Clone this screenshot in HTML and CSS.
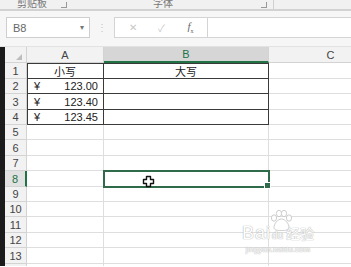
FILE: index.html
```html
<!DOCTYPE html>
<html>

<head>
    <meta charset="UTF-8">
    <title>Sheet1</title>
    <link rel="stylesheet" href="styles.css">
</head>

<body>
    <div class="ribbon">
        <span class="group-label lbl-clip">剪贴板</span>
        <span class="launcher"></span>
        <span class="group-label lbl-font">字体</span>
        <span class="launcher"></span>
        <span class="sep"></span>
    </div>

    <div class="formula-bar">
        <div class="name-box">
            <span>B8</span>
            <span class="arrow">&#9662;</span>
        </div>
        <div class="grip">&#8942;</div>
        <div class="fx-buttons">
            <span class="fx-btn">&#10005;</span>
            <span class="fx-btn">&#10003;</span>
            <span class="fx-btn fx"><i>f</i><sub>x</sub></span>
        </div>
        <div class="fx-input"></div>
    </div>

    <div class="main">
        <div class="edge"></div>
        <div class="sheet">
            <!-- header -->
            <div class="hd corner"><span class="tri"></span></div>
            <div class="hd col">A</div>
            <div class="hd col col-sel">B</div>
            <div class="hd col">C</div>

            <div class="hd row">1</div>
            <div class="c t-left t-top t-bottom t-right center">小写</div>
            <div class="c t-top t-bottom t-right center">大写</div>
            <div class="c"></div>

            <div class="hd row">2</div>
            <div class="c t-left t-bottom t-right money"><span>¥</span><span>123.00</span></div>
            <div class="c t-bottom t-right"></div>
            <div class="c"></div>

            <div class="hd row">3</div>
            <div class="c t-left t-bottom t-right money"><span>¥</span><span>123.40</span></div>
            <div class="c t-bottom t-right"></div>
            <div class="c"></div>

            <div class="hd row">4</div>
            <div class="c t-left t-bottom t-right money"><span>¥</span><span>123.45</span></div>
            <div class="c t-bottom t-right"></div>
            <div class="c"></div>

            <div class="hd row">5</div>
            <div class="c"></div>
            <div class="c"></div>
            <div class="c"></div>

            <div class="hd row">6</div>
            <div class="c"></div>
            <div class="c"></div>
            <div class="c"></div>

            <div class="hd row">7</div>
            <div class="c"></div>
            <div class="c"></div>
            <div class="c"></div>

            <div class="hd row row-sel">8</div>
            <div class="c"></div>
            <div class="c sel"></div>
            <div class="c"></div>

            <div class="hd row">9</div>
            <div class="c"></div>
            <div class="c"></div>
            <div class="c"></div>

            <div class="hd row">10</div>
            <div class="c"></div>
            <div class="c"></div>
            <div class="c"></div>

            <div class="hd row">11</div>
            <div class="c"></div>
            <div class="c"></div>
            <div class="c"></div>

            <div class="hd row">12</div>
            <div class="c"></div>
            <div class="c"></div>
            <div class="c"></div>

            <div class="hd row">13</div>
            <div class="c"></div>
            <div class="c"></div>
            <div class="c"></div>

            <div class="hd row"></div>
            <div class="c"></div>
            <div class="c"></div>
            <div class="c"></div>
        </div>

        <!-- mouse pointer over B8 -->
        <svg class="cursor" width="13" height="13" viewBox="0 0 13 13">
            <path d="M4.5 1.5h4v3h3v4h-3v3h-4v-3h-3v-4h3z" fill="#fff" stroke="#111" stroke-width="1.4" stroke-linejoin="round"/>
        </svg>

        <!-- watermark -->
        <div class="watermark">
            <svg class="paw" width="26" height="22" viewBox="0 0 26 22">
                <g fill="#fff" stroke="#c9c9c9" stroke-width="1">
                    <ellipse cx="6" cy="9" rx="2.6" ry="3.2"/>
                    <ellipse cx="11" cy="4.5" rx="2.6" ry="3.2"/>
                    <ellipse cx="16" cy="4.5" rx="2.6" ry="3.2"/>
                    <ellipse cx="21" cy="9" rx="2.6" ry="3.2"/>
                    <path d="M13.5 10c-4 0-7.5 5-7.5 8.5 0 2.5 3 3 7.5 3s7.5-.5 7.5-3c0-3.5-3.5-8.5-7.5-8.5z"/>
                </g>
            </svg>
            <div class="wm-line">
                <span class="wm-bai">Bai</span><span class="wm-du">du</span><span class="wm-jy">经验</span>
            </div>
            <div class="wm-url">jingyan.baidu.com</div>
        </div>
    </div>
</body>

</html>
```

FILE: styles.css
```css
body {
    margin: 0;
    width: 351px;
    height: 267px;
    overflow: hidden;
    background: #ffffff;
    font-family: "Liberation Sans", "Noto Sans CJK SC", sans-serif;
    color: #333;
}

/* ribbon strip, cut off at the top */
.ribbon {
    height: 9px;
    display: flex;
    align-items: flex-end;
    overflow: hidden;
    background: #f1f1f1;
    border-bottom: 2px solid #d2d2d2;
    font-family: "Noto Sans CJK SC", sans-serif;
    font-size: 10px;
    color: #777;
}

.group-label {
    line-height: 12px;
    flex: none;
}

.lbl-clip {
    margin-left: 17px;
}

.lbl-font {
    margin-left: 86px;
}

.launcher {
    width: 5px;
    height: 5px;
    margin-left: 14px;
    margin-bottom: 1px;
    border-right: 1px solid #999;
    border-bottom: 1px solid #999;
    flex: none;
}

.lbl-font + .launcher {
    margin-left: 88px;
}

.sep {
    width: 1px;
    height: 9px;
    margin-left: 6px;
    background: #d0d0d0;
}

/* formula bar */
.formula-bar {
    height: 36px;
    box-sizing: border-box;
    display: flex;
    align-items: flex-start;
    padding: 6px 0 0 6px;
    background: #f6f6f6;
    border-bottom: 1px solid #e2e2e2;
}

.name-box {
    width: 84px;
    height: 21px;
    box-sizing: border-box;
    display: flex;
    align-items: center;
    justify-content: space-between;
    padding: 0 5px 0 6px;
    background: #fff;
    border: 1px solid #cfcfcf;
    font-size: 11px;
    color: #666;
}

.name-box .arrow {
    font-size: 8px;
    color: #777;
}

.grip {
    width: 24px;
    height: 21px;
    line-height: 21px;
    text-align: center;
    font-size: 10px;
    color: #c4c4c4;
}

.fx-buttons {
    width: 93px;
    height: 21px;
    box-sizing: border-box;
    display: flex;
    align-items: center;
    background: #fff;
    border: 1px solid #d4d4d4;
    border-right: none;
}

.fx-btn {
    width: 29px;
    text-align: center;
    font-size: 10px;
    color: #c8c8c8;
}

.fx-btn:first-child {
    margin-left: 3px;
}

.fx {
    font-family: "Liberation Serif", serif;
    color: #666;
    font-size: 11px;
}

.fx sub {
    font-size: 6px;
}

.fx-input {
    flex: 1;
    height: 21px;
    box-sizing: border-box;
    background: #fff;
    border: 1px solid #d4d4d4;
    border-right: none;
}

/* grid */
.main {
    position: relative;
    display: flex;
    height: 219px;
    overflow: hidden;
}

.edge {
    width: 5px;
    flex: none;
    background: #1b1b1b;
}

.sheet {
    display: grid;
    grid-template-columns: 22px 77px 165px 124px;
    grid-template-rows: 16px 16px 15px 16px 15px 15px 16px 15px 16px 15px 15px 16px 15px 16px 15px;
    font-size: 11px;
}

.hd {
    box-sizing: border-box;
    background: #f2f2f2;
    border-right: 1px solid #d3d3d3;
    border-bottom: 1px solid #d3d3d3;
    color: #444;
    display: flex;
    align-items: center;
    justify-content: center;
}

.corner {
    position: relative;
}

.tri {
    width: 0;
    height: 0;
    margin: 5px 0 0 6px;
    border-left: 6px solid transparent;
    border-bottom: 6px solid #bdbdbd;
}

.col {
    font-size: 11px;
}

.col-sel {
    background: #d6d6d6;
    color: #217346;
    border-bottom: 2px solid #217346;
}

.row {
    font-size: 11px;
}

.row-sel {
    background: #e1e1e1;
    color: #217346;
    border-right: 2px solid #217346;
}

.c {
    box-sizing: border-box;
    border-right: 1px solid #dedede;
    border-bottom: 1px solid #dedede;
    display: flex;
    align-items: center;
    color: #222;
    white-space: nowrap;
}

.center {
    justify-content: center;
    font-family: "Noto Sans CJK SC", sans-serif;
    font-size: 11px;
}

.money {
    justify-content: space-between;
    padding: 0 5px 0 7px;
}

.t-right {
    border-right-color: #3a3a3a;
}

.t-bottom {
    border-bottom-color: #3a3a3a;
}

.t-left {
    box-shadow: inset 1px 0 0 #3a3a3a;
}

.t-top {
    box-shadow: inset 0 1px 0 #3a3a3a;
}

.t-left.t-top {
    box-shadow: inset 1px 1px 0 #3a3a3a;
}

.sel {
    position: relative;
    outline: 2px solid #2f6a4b;
    outline-offset: -1px;
}

.sel::after {
    content: "";
    position: absolute;
    right: -3px;
    bottom: -3px;
    width: 5px;
    height: 5px;
    background: #2f6a4b;
    border: 1px solid #fff;
}

.cursor {
    position: absolute;
    left: 142px;
    top: 128px;
}

.watermark {
    position: absolute;
    left: 232px;
    top: 162px;
    width: 92px;
    display: flex;
    flex-direction: column;
    align-items: center;
    color: #fff;
    opacity: 0.9;
}

.paw {
    margin-left: 6px;
    margin-bottom: -8px;
}

.wm-line {
    display: flex;
    align-items: baseline;
    text-shadow: 0 0 1px #a8a8a8, 0 0 1px #a8a8a8;
}

.wm-bai {
    font-family: "Liberation Sans", sans-serif;
    font-size: 18px;
    letter-spacing: 1px;
}

.wm-du {
    font-size: 10px;
    margin: 0 3px 0 1px;
}

.wm-jy {
    font-family: "Noto Sans CJK SC", sans-serif;
    font-size: 14px;
}

.wm-url {
    font-size: 8px;
    margin-top: 1px;
    text-shadow: 0 0 1px #a8a8a8, 0 0 1px #a8a8a8;
}
```
